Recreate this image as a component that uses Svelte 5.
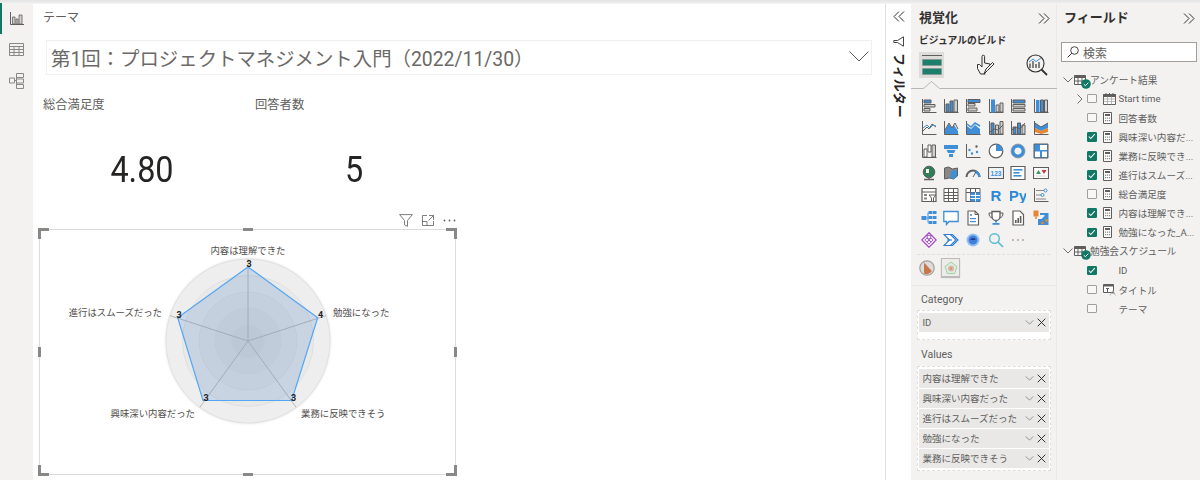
<script>
const G = '#605e5c', B = '#3f8fd8', L = '#d2d0ce', O = '#e8862e', W = '#fff';
const R = (x, y, w, h, f = B, s = 'none') => ({ d: `M${x} ${y}h${w}v${h}h${-w}z`, f, s });
const P = (d, f = 'none', s = G, sw = 1) => ({ d, f, s, sw });
const T = (t, x, y, fs, f = B) => ({ t, x, y, fs, f });
const C = (cx, cy, r, f = 'none', s = G, sw = 1) => ({
  d: `M${cx - r} ${cy}a${r} ${r} 0 1 0 ${2 * r} 0a${r} ${r} 0 1 0 ${-2 * r} 0z`, f, s, sw
});
const AX = P('M1.5 1v13.5H15.5');

const icons = [
  [AX, R(3, 2, 7, 3, B, G), R(3, 6.5, 11, 2.5, L, G), R(3, 10.5, 6, 2.5, L, G)],
  [AX, R(3, 6, 3, 8, B, G), R(7, 3, 3, 11, B, G), R(11, 2, 3.5, 12, L, G)],
  [AX, R(3, 1.5, 12, 3, B, G), R(3, 5.5, 7, 2.5, L, G), R(3, 10, 9, 3, L, G)],
  [AX, R(3, 1.5, 4, 13, B), R(8, 7, 3, 7, L, G), R(12, 5, 3, 9, L, G)],
  [AX, R(3, 2, 12, 3, B, G), R(3, 6.5, 12, 2.5, L, G), R(3, 10.5, 12, 2.5, L, G)],
  [AX, R(3, 2, 3.5, 12, B), R(7.5, 2, 3, 12, B, G), R(11.5, 2, 3, 12, L, G)],

  [AX, P('M2 11l4-4 2 2 3-5 4 3', 'none', G), P('M2 8l4-3 3 3 3-3 3 1', 'none', B)],
  [AX, P('M2 14V10l4-6 3 4 2-3 4 6v3z', B, 'none'), P('M2 10l4-7 3 5 3-5 3 6', 'none', G)],
  [AX, P('M2 14V6l4 3 4-4 5 4v5z', B, 'none'), P('M2 4l4 3 4-4 5 3', 'none', B, 1.5)],
  [AX, R(3, 3, 3, 11, B, G), R(7.5, 5, 3, 9, L, G), R(12, 1.5, 3, 12.5, L, G), P('M2 12l4-3 4 1 5-5', 'none', G)],
  [AX, R(3, 7, 3, 7, B, G), R(7.5, 3, 3, 11, B, G), R(12, 5, 3, 9, L, G), P('M2 10l4-3 4 2 5-6', 'none', G)],
  [AX, P('M2 3l6 4 7-4v5l-7 3-6-3z', B, 'none'), P('M2 8l6 3 7-3v4l-7 2-6-2z', O, 'none'), P('M2 3l6 4 7-4', 'none', G)],

  [AX, R(3, 6, 3, 8, W, G), R(7, 2, 3, 7, W, G), R(11, 2, 3.5, 12, L, G)],
  [R(1, 2, 14, 4, B), P('M3.5 7h9l-1.5 3h-6z', B, 'none'), R(6, 11, 4, 3, B)],
  [AX, C(11.5, 3.5, 1.2, G, 'none'), C(4.5, 7, 1.2, B, 'none'), C(7, 10.5, 1.2, B, 'none'), C(12, 9, 1.2, B, 'none')],
  [C(8, 8, 6.8, W, G, 1.2), P('M8 8V1.2a6.8 6.8 0 0 1 6.8 6.8z', B, 'none')],
  [C(8, 8, 5.2, 'none', B, 3.2), C(8, 8, 7, 'none', G, .5)],
  [R(1, 1, 14, 14, B), R(7, 2, 7, 5, W), R(2, 8.5, 5, 5.5, W), R(9, 8.5, 5, 5.5, W), P('M1 1h14v14H1z', 'none', G)],

  [C(8, 7, 5.8, '#2f7d52', G), R(5, 4, 3, 4, W), P('M3 14.5h10M8 13v1.5', 'none', G, 1.4)],
  [P('M1.5 3l4-1 4 2 5-1v8l-4 3-4-1-5 1z', '#8a8886', G), P('M8 6l6-1v6l-3 3-4-1 1-4z', B, 'none')],
  [P('M1.5 12a6.5 6.5 0 0 1 13 0', 'none', G, 2), P('M10 6.5a6.5 6.5 0 0 1 4.5 5.5', 'none', B, 2.4), P('M8 12l3-5', 'none', G)],
  [P('M.5 2.5h15v11H.5z', '#eef3f9', G, 1.2), T('123', 8, 10.5, 6.5, B)],
  [P('M1 1.5h14v13H1z', W, G, 1.2), R(3.5, 4, 9, 1.6, B), R(3.5, 7, 6, 1.6, B), R(3.5, 10, 8, 1.6, B)],
  [P('M.5 2.5h15v11H.5z', W, G, 1.2), P('M3 9l2.5-4 2.5 4z', '#3c9a5f', 'none'), P('M8.5 5h5l-2.5 4z', '#d13438', 'none'), R(3, 10.5, 10, 1, L)],

  [P('M1 1.5h14v13H1z', W, G, 1.2), P('M1 5h14', 'none', G), R(3, 7, 3, 2, '#8a8886'), R(3, 10.5, 3, 2, '#8a8886'), P('M8 8h7l-2.5 3v4l-2-1v-3z', W, G)],
  [P('M1 1.5h14v13H1zM1 5.5h14M1 8.5h14M1 11.5h14M5.5 1.5v13M10.5 1.5v13', W, G)],
  [P('M1 1.5h14v13H1zM1 5.5h14M5.5 1.5v13M10.5 1.5v13', W, G), R(5.5, 5.5, 9.5, 9, B), P('M5.5 8.5h9.5M5.5 11.5h9.5M10.5 5.5v9', 'none', W)],
  [T('R', 8, 13.5, 15, '#2b88d8')],
  [T('Py', 8, 13.5, 15, '#2b88d8')],
  [AX, P('M3 3.5h8M3 8h5M3 12h10', 'none', '#8a8886', 1.2), C(12.5, 3.5, 1.5, W, B), C(9.5, 8, 1.5, W, B)],

  [R(.5, 6, 5, 4, B), R(7.5, 1, 4, 3, B), R(7.5, 6, 4, 3, B), R(7.5, 11, 4, 3, B), R(12, 1, 3.5, 3, B), R(12, 6, 3.5, 3, B), R(12, 11, 3.5, 3, B), P('M5.5 8h2M7 2.5v10', 'none', B)],
  [P('M.8 1.5h14.4v10H6l-2.5 3v-3H.8z', W, B, 1.3)],
  [P('M3 1h7l3.5 3.5V15H3z', W, G, 1.1), P('M10 1v3.5h3.5', 'none', G), C(6, 5, 1, B, 'none'), R(5, 8, 6, 1.2, B), R(5, 11, 6, 1.2, B)],
  [P('M4 1.5h8v5a4 4 0 0 1-8 0z', W, G, 1.3), P('M4 3H1c0 3 1 4.5 3.5 5M12 3h3c0 3-1 4.5-3.5 5', 'none', G), P('M8 10.5v2', 'none', B, 2), R(4.5, 13, 7, 1.8, B)],
  [P('M3 1h7l3.5 3.5V15H3z', W, G, 1.2), R(5, 10, 1.6, 3, G), R(7.4, 8, 1.6, 5, G), R(9.8, 6, 1.6, 7, G)],
  [P('M7 3h8.5v12H5V9h3.5l3-3V5H7z', B, 'none'), R(.5, .5, 5, 6, O), P('M3 6.5V9', 'none', O, 1.5), C(13.5, 10.5, 1.4, O, 'none'), C(9.5, 13, 1.4, O, 'none')],

  [P('M8 .8l7.2 7.2L8 15.2.8 8z', W, '#a24ac0', 1.3), R(6.2, 3.3, 3.6, 3.6, W, '#a24ac0'), P('M3.8 8l2-2 2 2-2 2zM8.2 8l2-2 2 2-2 2zM6 10.2l2-2 2 2-2 2z', W, '#a24ac0')],
  [P('M1 2.5h6.5L13 8l-5.5 5.5H1L6.5 8z', W, '#2b7cd3', 1.2), P('M7 2.5h2.5L15 8l-5.5 5.5H7', 'none', '#2b7cd3', 1.2), P('M4 8h5', 'none', '#2b7cd3', 1)],
  [C(8, 8, 6.5, '#8fc0f5', 'none'), C(8, 8, 4.5, '#3f7fd8', 'none'), P('M5.5 8a2.5 2 0 0 1 5 0z', '#1c3f8a', 'none')],
  [C(6.5, 6.5, 4.8, 'none', '#59bcd0', 1.4), P('M10 10l5 5', 'none', '#59bcd0', 1.7)],
  [C(3, 8, .7, G, 'none'), C(8, 8, .7, G, 'none'), C(13, 8, .7, G, 'none')]
];

const categories = ['ID'];
const values = ['内容は理解できた', '興味深い内容だった', '進行はスムーズだった', '勉強になった', '業務に反映できそう'];

const fields = [
  { group: true, label: 'アンケート結果' },
  { label: 'Start time', icon: 'date', expand: true },
  { label: '回答者数', icon: 'calc' },
  { label: '興味深い内容だ...', icon: 'calc', on: true },
  { label: '業務に反映でき...', icon: 'calc', on: true },
  { label: '進行はスムーズ...', icon: 'calc', on: true },
  { label: '総合満足度', icon: 'calc' },
  { label: '内容は理解でき...', icon: 'calc', on: true },
  { label: '勉強になった_A...', icon: 'calc', on: true },
  { group: true, label: '勉強会スケジュール' },
  { label: 'ID', on: true },
  { label: 'タイトル', icon: 'text' },
  { label: 'テーマ' }
];

const cx = 248, cy = 341;
const rings = [82, 65.5, 49, 33, 16.5];
const pt = (i, r) => {
  const a = (-90 + i * 72) * Math.PI / 180;
  return [cx + r * Math.cos(a), cy + r * Math.sin(a)];
};
const spokes = [0, 1, 2, 3, 4].map((i) => pt(i, 82));
const poly = '248,267 317.7,317.7 291.7,400.5 203,400.5 177.7,317.7';
const nums = [[249, 267, '3'], [320.5, 318, '4'], [293.5, 401, '3'], [206, 401, '3'], [179, 318, '3']];
const labels = [
  [248, 253.5, 'middle', '内容は理解できた'],
  [333, 316, 'start', '勉強になった'],
  [301, 416.5, 'start', '業務に反映できそう'],
  [195, 416.5, 'end', '興味深い内容だった'],
  [162, 316, 'end', '進行はスムーズだった']
];
const handles = ['tl', 'tm', 'tr', 'ml', 'mr', 'bl', 'bm', 'br'];
</script>

{#snippet chev(w = 10, h = 6, color = '#605e5c')}
  <svg width={w} height={h} viewBox="0 0 10 6"><path d="M.5 .5L5 5l4.5-4.5" fill="none" stroke={color} stroke-width=".9" vector-effect="non-scaling-stroke" /></svg>
{/snippet}

{#snippet dbl(flip = false)}
  <svg width="12" height="11" viewBox="0 0 12 11" class:flip><path d="M1 .5l5 5-5 5M6 .5l5 5-5 5" fill="none" stroke="#323130" stroke-width="1" /></svg>
{/snippet}

{#snippet pill(text)}
  <div class="pill">
    <span class="pilltext">{text}</span>
    <span class="pillchev">{@render chev(9, 5, '#8a8886')}</span>
    <svg class="pillx" width="9" height="9" viewBox="0 0 9 9"><path d="M.7 .7l7.6 7.6M8.3 .7L.7 8.3" stroke="#323130" stroke-width="1" /></svg>
  </div>
{/snippet}

{#snippet badge()}
  <svg class="badge" width="10" height="10" viewBox="0 0 10 10"><circle cx="5" cy="5" r="4.8" fill="#117865" /><path d="M2.8 5.2l1.6 1.5 2.9-3" fill="none" stroke="#fff" stroke-width="1" /></svg>
{/snippet}

<div class="app">
  <div class="topline"></div>
  <div class="body">
    <nav class="rail">
      <div class="railitem active">
        <svg width="14" height="13" viewBox="0 0 14 13"><path d="M.5 0v12.5H14" fill="none" stroke="#605e5c" /><path d="M2.5 5h2.5v7H2.500zM6 7h2v5H6zM9 3h3v9H9z" fill="#d2d0ce" stroke="#605e5c" stroke-width=".8" /></svg>
      </div>
      <div class="railitem">
        <svg width="15" height="13" viewBox="0 0 15 13"><path d="M.5 .5h14v12H.5zM.5 3.500h14M.5 6.500h14M.5 9.500h14M5 3.500v9M10 3.500v9" fill="none" stroke="#8a8886" /></svg>
      </div>
      <div class="railitem">
        <svg width="16" height="16" viewBox="0 0 16 16"><path d="M7.500 .5h7v4h-7zM7.500 6h7v4h-7zM7.500 11.500h7v4h-7zM.5 5h5v5h-5zM5.500 7.500h2M7.500 2v12" fill="none" stroke="#8a8886" /></svg>
      </div>
    </nav>

    <main class="canvas">
      <div class="sliceLabel">テーマ</div>
      <div class="slicer">
        <span>第1回：プロジェクトマネジメント入門（2022/11/30）</span>
        <svg width="20" height="11" viewBox="0 0 20 11"><path d="M.5 .5L10 10 19.500 .5" fill="none" stroke="#605e5c" /></svg>
      </div>
      <div class="cards">
        <section class="card">
          <div class="cardLabel">総合満足度</div>
          <div class="cardValue">4.80</div>
        </section>
        <section class="card">
          <div class="cardLabel">回答者数</div>
          <div class="cardValue">5</div>
        </section>
      </div>
      <div class="vizHead">
        <svg width="14" height="13" viewBox="0 0 14 13"><path d="M.6 .6h12.800L8.500 6.500v5.800l-3-1.500V6.500z" fill="none" stroke="#605e5c" stroke-width=".8" /></svg>
        <svg width="12" height="11" viewBox="0 0 12 11"><path d="M5 .5H.5v10h11V6M.5 6.500h4.500v4M7 .5h4.500V5M11.500 .5L6.500 5.500" fill="none" stroke="#605e5c" stroke-width=".8" /></svg>
        <svg width="13" height="3" viewBox="0 0 13 3"><circle cx="1.500" cy="1.500" r=".9" fill="#605e5c" /><circle cx="6.500" cy="1.500" r=".9" fill="#605e5c" /><circle cx="11.500" cy="1.500" r=".9" fill="#605e5c" /></svg>
      </div>
      <div class="visual">
        {#each handles as h}<i class="h {h}"></i>{/each}
        <svg class="radar" width="417" height="246" viewBox="39 229 417 246">
          <defs>
            <filter id="soft" x="-20%" y="-20%" width="140%" height="140%"><feGaussianBlur stdDeviation="1.200" /></filter>
          </defs>
          <circle {cx} {cy} r="83" fill="#000" opacity=".08" filter="url(#soft)" />
          {#each rings as r, i}
            <circle {cx} {cy} {r} fill={i === 0 ? '#eeeeee' : 'rgba(0,0,0,.018)'} stroke="#dcdcdc" stroke-width=".8" />
          {/each}
          {#each spokes as s}
            <line x1={cx} y1={cy} x2={s[0]} y2={s[1]} stroke="#b2b2b2" stroke-width=".9" />
          {/each}
          <polygon points={poly} fill="rgba(70,130,200,.2)" stroke="#52a6f5" stroke-width="1.200" />
          {#each labels as l}
            <text x={l[0]} y={l[1]} text-anchor={l[2]} class="axisText">{l[3]}</text>
          {/each}
          {#each nums as n}
            <text x={n[0]} y={n[1]} text-anchor="middle" class="numText">{n[2]}</text>
          {/each}
        </svg>
      </div>
    </main>

    <aside class="filterPane">
      <div class="fpChev">{@render dbl(true)}</div>
      <svg class="fpIcon" width="11" height="11" viewBox="0 0 11 11"><path d="M10.500 .8v9.400L4.500 6.500H.8v-2h3.700z" fill="none" stroke="#323130" stroke-width=".9" /></svg>
      <div class="fpText">フィルター</div>
    </aside>

    <aside class="vizPane">
      <header class="paneHead"><h2>視覚化</h2>{@render dbl()}</header>
      <div class="build">ビジュアルのビルド</div>
      <div class="tabs">
        <div class="tab sel">
          <svg width="20" height="22" viewBox="0 0 20 22"><path d="M0 1.500h20" stroke="#605e5c" /><rect x=".5" y="5.500" width="19" height="6" fill="#1b7f6c" stroke="#8a8886" stroke-dasharray="1 1" /><rect x=".5" y="14.500" width="19" height="6" fill="#1b7f6c" stroke="#8a8886" stroke-dasharray="1 1" /></svg>
        </div>
        <div class="tab">
          <svg width="20" height="22" viewBox="0 0 20 22"><path d="M7 13V2.500a1.300 1.300 0 0 1 2.600 0V9l5.400 1-.5 3M7 13l-2.500-2.500H2.500v4l3 5.500h5" fill="none" stroke="#323130" /><path d="M9 20l2-5 6.500-6.500 1.500 1.500-6.500 6.500z" fill="#f3f2f1" stroke="#323130" /></svg>
        </div>
        <div class="tab">
          <svg width="22" height="22" viewBox="0 0 22 22"><circle cx="9.500" cy="9.500" r="8.500" fill="none" stroke="#323130" stroke-width="1.100" /><path d="M15.500 15.500l5.500 5.500" stroke="#323130" stroke-width="1.800" /><path d="M4 14V9.500M7 14V7M10 14V10M13 14V8" stroke="#605e5c" stroke-width="1.500" /><path d="M3 8l4-3 3 2.500 5-3.500" fill="none" stroke="#3f8fd8" /></svg>
        </div>
      </div>
      <svg class="notch" width="146" height="8" viewBox="0 0 146 8"><path d="M0 7.500h12.500l8-7 8 7H146" fill="none" stroke="#b8b6b4" /></svg>
      <div class="grid">
        {#each icons as icon}
          <div class="cell">
            <svg width="16" height="16" viewBox="0 0 16 16">
              {#each icon as s}
                {#if s.t}
                  <text x={s.x} y={s.y} font-size={s.fs} fill={s.f} text-anchor="middle" class="iconText">{s.t}</text>
                {:else}
                  <path d={s.d} fill={s.f} stroke={s.s} stroke-width={s.sw ?? 1} />
                {/if}
              {/each}
            </svg>
          </div>
        {/each}
      </div>
      <div class="custom">
        <svg width="16" height="16" viewBox="0 0 16 16"><circle cx="8" cy="8" r="7.200" fill="#dedcda" stroke="#a19f9d" stroke-width="1.200" /><path d="M5 2.500L12.800 11A6 6 0 0 1 5 13.500z" fill="#c9764b" /></svg>
        <div class="customSel">
          <svg width="14" height="14" viewBox="0 0 14 14"><path d="M7 1l6 4.500-2.300 7H3.300L1 5.500z" fill="#dcefdc" stroke="#9fd0a8" /><circle cx="7" cy="7.500" r="3" fill="#e4b0b8" /><circle cx="7" cy="7.500" r="1.200" fill="#c6a24a" /></svg>
        </div>
      </div>
      <div class="wellTitle first">Category</div>
      <div class="well">
        {#each categories as c}{@render pill(c)}{/each}
        <div class="spacer"></div>
      </div>
      <div class="wellTitle">Values</div>
      <div class="well">
        {#each values as v}{@render pill(v)}{/each}
      </div>
    </aside>

    <aside class="fieldPane">
      <header class="paneHead"><h2>フィールド</h2>{@render dbl()}</header>
      <div class="search">
        <svg width="12" height="12" viewBox="0 0 12 12"><circle cx="7.500" cy="4.500" r="3.800" fill="none" stroke="#323130" stroke-width=".9" /><path d="M4.800 7.200L.6 11.400" stroke="#323130" stroke-width="1" /></svg>
        <span>検索</span>
      </div>
      <div class="tree">
        {#each fields as f}
          {#if f.group}
            <div class="row group">
              <span class="gchev">{@render chev(10, 6, '#605e5c')}</span>
              <span class="tableIcon">
                <svg width="12" height="10" viewBox="0 0 12 10"><path d="M.5 .5h11v9H.5z" fill="#fff" stroke="#605e5c" /><path d="M.5 .5h11v2.500H.5z" fill="#605e5c" /><path d="M.5 6h11M4 3v6.500M8 3v6.500" stroke="#605e5c" /></svg>
                {@render badge()}
              </span>
              <span class="gtext">{f.label}</span>
            </div>
          {:else}
            <div class="row">
              <span class="exp">
                {#if f.expand}<svg width="6" height="10" viewBox="0 0 6 10"><path d="M.5 .5L5 5 .5 9.500" fill="none" stroke="#605e5c" stroke-width=".9" /></svg>{/if}
              </span>
              <span class="check" class:on={f.on}>
                {#if f.on}<svg width="8" height="7" viewBox="0 0 8 7"><path d="M.8 3.500l2.200 2.200L7.200 1" fill="none" stroke="#fff" stroke-width="1.100" /></svg>{/if}
              </span>
              <span class="ficon">
                {#if f.icon === 'calc'}
                  <svg width="9" height="12" viewBox="0 0 9 12"><path d="M.5 .5h8v11h-8z" fill="#fff" stroke="#605e5c" /><path d="M2 2h5v2H2z" fill="#605e5c" /><path d="M2 5.500h1.200v1.200H2zM4 5.500h1.200v1.200H4zM6 5.500h1.200v1.200H6zM2 8h1.200v1.200H2zM4 8h1.200v1.200H4zM6 8h1.200v1.200H6z" fill="#8a8886" /></svg>
                {:else if f.icon === 'date'}
                  <svg width="13" height="12" viewBox="0 0 13 12"><path d="M.5 1.500h12v10H.5z" fill="#fff" stroke="#605e5c" /><path d="M.5 1.500h12v2H.5zM3 0v2M6.500 0v2M10 0v2" fill="#605e5c" stroke="#605e5c" /><path d="M.5 6h12M.5 8.500h12M4.500 3.500v8M8.500 3.500v8" stroke="#a19f9d" stroke-width=".7" /></svg>
                {:else if f.icon === 'text'}
                  <svg width="13" height="12" viewBox="0 0 13 12"><path d="M.5 .5h10v8H.5z" fill="#fff" stroke="#605e5c" /><path d="M.5 .5h10v2H.5z" fill="#605e5c" /><path d="M3 4.500h3M4.500 4.500v4.500" stroke="#605e5c" /><path d="M7 11.500l3-5 2.500 5M8.500 9.500h3" fill="none" stroke="#a19f9d" stroke-width=".7" /></svg>
                {/if}
              </span>
              <span class="ftext">{f.label}</span>
            </div>
          {/if}
        {/each}
      </div>
    </aside>
  </div>
</div>

<style>
  :global(body) { margin: 0; background: #fff; }
  .app {
    width: 1200px; height: 480px; overflow: hidden; display: flex; flex-direction: column;
    font-family: Roboto, "Noto Sans CJK JP", sans-serif; color: #605e5c;
  }
  .topline { height: 4px; flex: none; background: linear-gradient(#e4e4e4, #ececec 60%, #f6f6f6); }
  .body { flex: 1; display: flex; min-height: 0; }

  .rail { width: 33px; flex: none; background: #f3f2f1; display: flex; flex-direction: column; }
  .railitem { height: 31px; display: flex; align-items: center; justify-content: center; border-left: 2px solid transparent; padding-right: 2px; }
  .railitem.active { border-left-color: #117865; margin-top: -1px; }

  .canvas { width: 852px; flex: none; background: #fff; padding: 0 12px 0 10px; box-sizing: border-box; }
  .sliceLabel { font-size: 12px; line-height: 28px; height: 36px; }
  .slicer {
    margin: 0 1px 0 3px; height: 35px; box-sizing: border-box; border: 1px solid #f0f0f0; padding: 0 2px 0 4px;
    display: flex; align-items: center; justify-content: space-between; font-size: 19.400px; color: #6b6967; white-space: nowrap;
  }
  .slicer svg { margin-top: -3px; }
  .cards { display: flex; margin-top: 20px; gap: 14px; }
  .card { width: 198px; }
  .cardLabel { font-size: 12.300px; line-height: 20px; }
  .cardValue { margin-top: 32px; text-align: center; font-size: 36px; line-height: 46px; color: #252423; transform: scaleX(.9); }
  .vizHead { width: 413px; height: 18px; margin-top: 18px; display: flex; align-items: center; justify-content: flex-end; gap: 9px; }
  .visual { position: relative; width: 417px; height: 246px; margin-left: -4px; box-sizing: border-box; outline: 1px solid #dcdcdc; outline-offset: -1px; }
  .radar { display: block; }
  .axisText { font-size: 9.400px; fill: #4f4d4b; }
  .numText { font-size: 9px; font-weight: 700; fill: #252423; }
  .h { position: absolute; background: #8a8886; }
  .tm, .bm { width: 10px; height: 3px; left: calc(50% - 5px); }
  .tm { top: -1px; } .bm { bottom: -1px; }
  .ml, .mr { width: 3px; height: 10px; top: calc(50% - 5px); }
  .ml { left: -1px; } .mr { right: -1px; }
  .tl, .tr, .bl, .br { width: 8px; height: 8px; background: none; border: 0 solid #8a8886; }
  .tl { top: -1px; left: -1px; border-width: 3px 0 0 3px; }
  .tr { top: -1px; right: -1px; border-width: 3px 3px 0 0; }
  .bl { bottom: -1px; left: -1px; border-width: 0 0 3px 3px; }
  .br { bottom: -1px; right: -1px; border-width: 0 3px 3px 0; }

  .filterPane { width: 26px; flex: none; box-sizing: border-box; border-left: 1px solid #e1dfdd; background: #fff; display: flex; flex-direction: column; align-items: center; }
  .fpChev { height: 12px; margin-top: 7px; }
  .fpIcon { margin-top: 13px; }
  .fpText { margin-top: 6px; writing-mode: vertical-rl; text-orientation: sideways; font-size: 13px; line-height: 16px; font-weight: 700; color: #252423; }
  .flip { transform: scaleX(-1); display: block; }

  .vizPane { width: 146px; flex: none; box-sizing: border-box; background: #f3f2f1; border-right: 1px solid #ebe9e7; }
  .paneHead { height: 25px; display: flex; align-items: center; justify-content: space-between; padding: 0 6px 0 8px; }
  .fieldPane .paneHead { padding: 0 5px 0 7px; }
  .paneHead svg { margin-top: 4px; }
  h2 { margin: 0; font-size: 13px; font-weight: 700; color: #323130; }
  .build { margin-left: 8px; height: 23px; line-height: 23px; font-size: 9.800px; font-weight: 700; color: #323130; }
  .tabs { display: flex; padding-left: 8px; height: 26px; }
  .tab { display: flex; align-items: center; justify-content: center; width: 25px; height: 26px; }
  .tab.sel { background: #dedcda; }
  .tab:nth-child(2) { margin-left: 28px; }
  .tab:nth-child(3) { margin-left: 27px; }
  .notch { display: block; margin-top: 3px; }
  .grid { margin: 6px 0 0 6.500px; display: grid; grid-template-columns: repeat(6, 22.400px); grid-auto-rows: 22.300px; }
  .cell { display: flex; align-items: center; justify-content: center; }
  .iconText { font-family: "Liberation Sans", sans-serif; font-weight: 700; }
  .custom { margin: 3px 6px 0; padding: 0 0 5px 2px; height: 25px; border-top: 1px dashed #e1dfdd; display: flex; align-items: center; gap: 6px; }
  .customSel { width: 19px; height: 19px; box-sizing: border-box; background: #eeece9; border: 1px solid #bdbbb9; box-shadow: 0 1px 1px #bbb; display: flex; align-items: center; justify-content: center; }
  .wellTitle { margin-left: 10px; font-size: 10.500px; line-height: 14px; height: 15px; margin-top: 8px; }
  .wellTitle.first { margin-top: 0; margin-left: 0; padding: 7px 0 0 10px; height: 22px; box-sizing: border-box; border-top: 1px solid #ebe9e7; }
  .well { margin: 3px 6px 0 5.500px; width: 134px; padding: 2px 1px; box-sizing: border-box; background: #fff; border: 1px dashed #e1dfdd; display: flex; flex-direction: column; gap: 1.500px; }
  .spacer { height: 4px; }
  .pill { height: 18.500px; flex: none; background: #e9e8e7; display: flex; align-items: center; padding: 0 3px 0 4px; font-size: 9.500px; color: #605e5c; box-sizing: border-box; }
  .pilltext { flex: 1; min-width: 0; white-space: nowrap; }
  .pillchev { display: flex; margin: 0 3px 0 2px; }
  .pillx { flex: none; }

  .fieldPane { width: 143px; flex: none; background: #f3f2f1; }
  .search { margin: 13px 3px 0 4px; height: 20px; box-sizing: border-box; background: #fff; border: 1px solid #a19f9d; display: flex; align-items: center; gap: 4px; padding-left: 5px; font-size: 12px; color: #605e5c; }
  .tree { margin-top: 8px; }
  .row { height: 19.100px; display: flex; align-items: center; font-size: 9.600px; }
  .gchev { width: 17px; padding-left: 6px; box-sizing: border-box; display: flex; flex: none; }
  .tableIcon { position: relative; width: 16px; display: flex; flex: none; }
  .badge { position: absolute; left: 7px; top: 4px; }
  .gtext { font-size: 9.700px; color: #605e5c; }
  .exp { width: 30px; padding-left: 20px; box-sizing: border-box; display: flex; flex: none; }
  .check { width: 9.500px; height: 9.500px; flex: none; box-sizing: border-box; border: 1px solid #a19f9d; background: #f8f7f6; border-radius: 1px; display: flex; align-items: center; justify-content: center; }
  .check.on { background: #117865; border-color: #117865; }
  .ficon { width: 22px; flex: none; padding-left: 6px; box-sizing: border-box; display: flex; }
  .ftext { flex: 1; min-width: 0; white-space: nowrap; }
</style>
